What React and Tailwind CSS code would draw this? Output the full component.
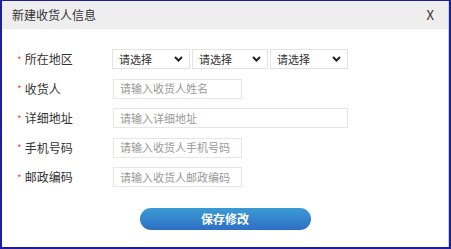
import React from "react";

const font = { fontFamily: '"Microsoft YaHei", "Noto Sans CJK SC", sans-serif' };

function Chevron() {
  return (
    <svg width="9" height="6" viewBox="0 0 9 6" className="shrink-0">
      <path d="M1 1l3.5 3.5L8 1" fill="none" stroke="#222" strokeWidth="2" />
    </svg>
  );
}

function Select({ w }) {
  return (
    <div className={`flex h-5 items-center justify-between border border-[#e3e3e3] bg-white pl-[6px] pr-[6px] ${w}`}>
      <span className="text-[11px] text-[#333]">请选择</span>
      <Chevron />
    </div>
  );
}

function Label({ children }) {
  return (
    <div className="flex w-[95px] items-center pl-[15px] text-[12px] text-[#333]">
      <span className="mr-[3px] text-[10px] text-[#e55]">*</span>
      {children}
    </div>
  );
}

function Input({ placeholder, w }) {
  return (
    <div className={`flex h-5 items-center border border-[#e6e6e6] px-[6px] text-[11px] text-[#999] ${w}`}>
      {placeholder}
    </div>
  );
}

export default function App() {
  const rows = [
    { label: "收货人", placeholder: "请输入收货人姓名", w: "w-[129px]" },
    { label: "详细地址", placeholder: "请输入详细地址", w: "w-[235px]" },
    { label: "手机号码", placeholder: "请输入收货人手机号码", w: "w-[129px]" },
    { label: "邮政编码", placeholder: "请输入收货人邮政编码", w: "w-[129px]" },
  ];

  return (
    <div
      style={font}
      className="h-[249px] w-[451px] border-t border-l-2 border-r-2 border-b-2 border-[#1d1da3] bg-white"
    >
      <div className="flex h-full flex-col border-r border-[#cfcfcf]">
        <div className="flex h-[28px] items-center justify-between bg-[#eeeeee] pl-[10px] pr-[14px]">
          <span className="text-[12px] text-[#333]">新建收货人信息</span>
          <span className="text-[13px] text-[#333]">X</span>
        </div>
        <div className="flex flex-col gap-[9.5px] pt-[20px]">
          <div className="flex items-center">
            <Label>所在地区</Label>
            <div className="ml-[15px] flex gap-[2px]">
              <Select w="w-[78px]" />
              <Select w="w-[76px]" />
              <Select w="w-[78px]" />
            </div>
          </div>
          {rows.map((r) => (
            <div key={r.label} className="flex items-center">
              <Label>{r.label}</Label>
              <div className="ml-[16px]">
                <Input placeholder={r.placeholder} w={r.w} />
              </div>
            </div>
          ))}
        </div>
        <div className="flex justify-center pt-[21px]">
          <button className="h-[22px] w-[171px] rounded-full bg-gradient-to-b from-[#3a9bd4] to-[#2f6fc4] text-[12px] font-bold text-white">
            保存修改
          </button>
        </div>
      </div>
    </div>
  );
}
